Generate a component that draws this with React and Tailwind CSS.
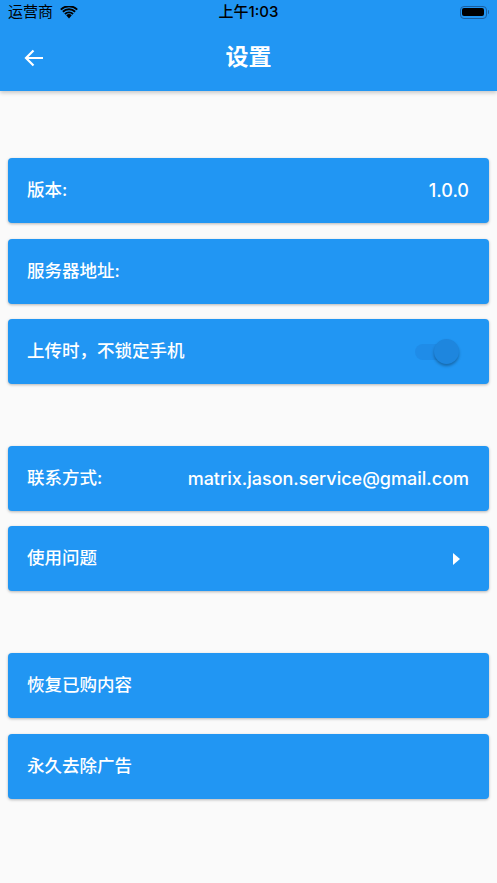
import React from "react";

const FONT = { fontFamily: 'Inter, "Noto Sans CJK SC", sans-serif' };

function StatusBar() {
  return (
    <div className="relative flex h-6 items-center px-2 text-[15px] text-black">
      <div className="flex items-center gap-[7px]">
        <span>运营商</span>
        <svg width="18" height="13" viewBox="0 0 18 13">
          <path d="M9 12.5 L6.2 9.3 A4 4 0 0 1 11.8 9.3 Z" fill="black" />
          <path d="M4.3 7.3 A6.8 6.8 0 0 1 13.7 7.3 L12.4 8.7 A4.9 4.9 0 0 0 5.6 8.7 Z" fill="black" />
          <path d="M2.2 5.1 A9.8 9.8 0 0 1 15.8 5.1 L14.5 6.5 A7.9 7.9 0 0 0 3.5 6.5 Z" fill="black" />
          <path d="M0.1 2.9 A12.8 12.8 0 0 1 17.9 2.9 L16.6 4.3 A10.9 10.9 0 0 0 1.4 4.3 Z" fill="black" />
        </svg>
      </div>
      <span className="absolute left-1/2 -translate-x-1/2 font-medium">上午1:03</span>
      <div className="ml-auto flex items-center">
        <div className="flex h-[13px] w-[27px] items-center rounded-[4px] border border-[#1a5fa0] p-[1.5px]">
          <div className="h-full w-full rounded-[2px] bg-black" />
        </div>
        <div className="ml-[1px] h-[4px] w-[1.5px] rounded-r bg-[#1a5fa0]" />
      </div>
    </div>
  );
}

function Card({ children }) {
  return (
    <div className="mx-2 flex h-[65px] items-center rounded-[4px] bg-[#2196f3] pl-[19px] pr-[20px] text-[17.5px] font-medium text-white shadow-[0_1px_3px_rgba(0,0,0,0.28)]">
      {children}
    </div>
  );
}

function Toggle() {
  return (
    <div className="relative mr-[10px] flex h-[25px] w-[44px] items-center">
      <div className="h-[16px] w-[34px] rounded-full bg-[#1f8ce8]" />
      <div className="absolute right-0 top-0 h-[25px] w-[25px] rounded-full bg-[#1e86de] shadow-[0_2px_3px_rgba(0,0,0,0.3)]" />
    </div>
  );
}

export default function App() {
  return (
    <div className="min-h-[883px] bg-[#fafafa]" style={FONT}>
      <div className="bg-[#2196f3] shadow-[0_2px_4px_rgba(0,0,0,0.2)]">
        <StatusBar />
        <div className="relative flex h-[67px] items-center">
          <svg className="ml-6" width="20" height="18" viewBox="0 0 20 18">
            <path d="M19 9 H2 M9.5 1.5 L2 9 L9.5 16.5" stroke="white" strokeWidth="2.2" fill="none" />
          </svg>
          <span className="absolute left-1/2 -translate-x-1/2 text-[23px] font-semibold text-white">设置</span>
        </div>
      </div>

      <div className="flex flex-col gap-[15.5px] pt-[67px]">
        <Card>
          <span>版本:</span>
          <span className="ml-auto text-[18px]">1.0.0</span>
        </Card>
        <Card>
          <span>服务器地址:</span>
        </Card>
        <Card>
          <span>上传时，不锁定手机</span>
          <div className="ml-auto">
            <Toggle />
          </div>
        </Card>
      </div>

      <div className="flex flex-col gap-[15.5px] pt-[61.5px]">
        <Card>
          <span>联系方式:</span>
          <span className="ml-auto text-[18px]">matrix.jason.service@gmail.com</span>
        </Card>
        <Card>
          <span>使用问题</span>
          <svg className="ml-auto mr-[9px]" width="7" height="12" viewBox="0 0 7 12">
            <path d="M0 0 L7 6 L0 12 Z" fill="white" />
          </svg>
        </Card>
      </div>

      <div className="flex flex-col gap-[15.5px] pt-[62px]">
        <Card>
          <span>恢复已购内容</span>
        </Card>
        <Card>
          <span>永久去除广告</span>
        </Card>
      </div>
    </div>
  );
}
